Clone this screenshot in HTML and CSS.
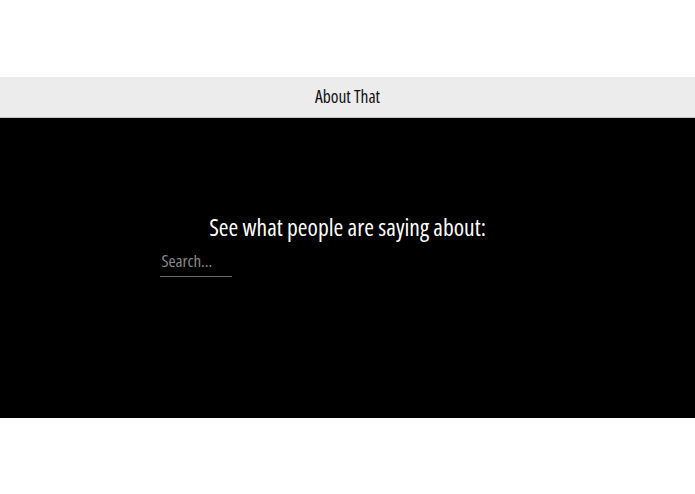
FILE: index.html
```html
<!DOCTYPE html>
<html>
<head>
<meta charset="utf-8">
<link rel="stylesheet" href="styles.css">
</head>
<body>
<div class="top"></div>
<header class="bar">About That</header>
<main class="hero">
  <div class="content">
    <h1 class="title">See what people are saying about:</h1>
    <input class="search" type="text" placeholder="Search...">
  </div>
</main>
</body>
</html>
```
FILE: styles.css
```css
html, body {
  margin: 0;
  padding: 0;
  background: #ffffff;
  font-family: "Open Sans", "DejaVu Sans Condensed", sans-serif;
  font-stretch: 75%;
}
.top {
  height: 77px;
}
.bar {
  height: 41px;
  box-sizing: border-box;
  padding-bottom: 3px;
  background: #ececec;
  border-bottom: 1px solid #c4c4c4;
  display: flex;
  align-items: center;
  justify-content: center;
  font-size: 17.5px;
  color: #111;
}
.hero {
  height: 300px;
  background: #000;
  display: flex;
  justify-content: center;
}
.content {
  width: 376px;
  padding-top: 94px;
  display: flex;
  flex-direction: column;
}
.title {
  margin: 0;
  font-weight: normal;
  font-size: 23.5px;
  color: #fff;
  text-align: center;
  line-height: 30px;
}
.search {
  margin-top: 10px;
  width: 72px;
  box-sizing: border-box;
  height: 25px;
  background: transparent;
  border: none;
  border-bottom: 1px solid #6a6a6a;
  color: #fff;
  font-family: inherit;
  font-stretch: 75%;
  font-size: 17px;
  line-height: 17px;
  padding: 0 2px 7px 2px;
  outline: none;
}
.search::placeholder {
  color: #8a8a8a;
}
```
